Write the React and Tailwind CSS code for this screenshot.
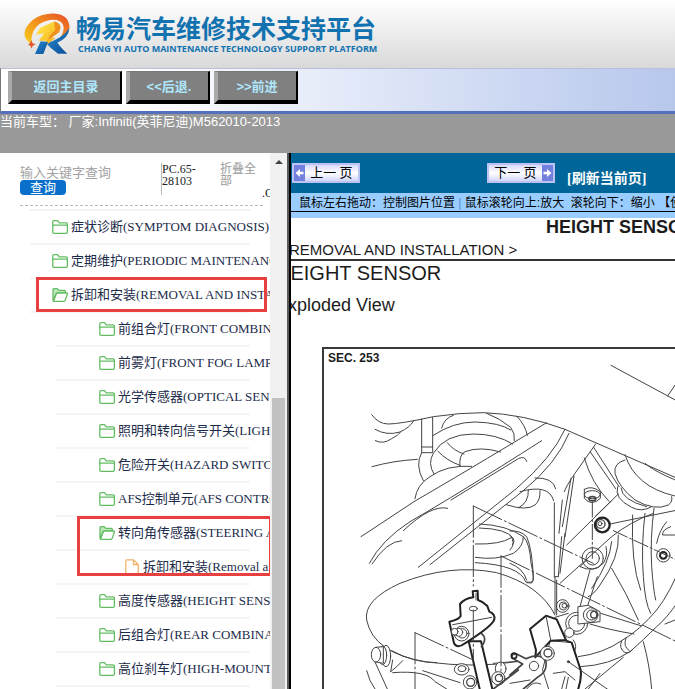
import React from 'react';

const treeItems = [
  { id: 1, level: 1, type: 'folder', label: '症状诊断(SYMPTOM DIAGNOSIS)' },
  { id: 2, level: 1, type: 'folder', label: '定期维护(PERIODIC MAINTENANCE)' },
  { id: 3, level: 1, type: 'open', label: '拆卸和安装(REMOVAL AND INSTALLATION)', mark: 'single' },
  { id: 4, level: 2, type: 'folder', label: '前组合灯(FRONT COMBINATION LAMP)' },
  { id: 5, level: 2, type: 'folder', label: '前雾灯(FRONT FOG LAMP)' },
  { id: 6, level: 2, type: 'folder', label: '光学传感器(OPTICAL SENSOR)' },
  { id: 7, level: 2, type: 'folder', label: '照明和转向信号开关(LIGHTING & TURN SIGNAL SWITCH)' },
  { id: 8, level: 2, type: 'folder', label: '危险开关(HAZARD SWITCH)' },
  { id: 9, level: 2, type: 'folder', label: 'AFS控制单元(AFS CONTROL UNIT)' },
  { id: 10, level: 2, type: 'open', label: '转向角传感器(STEERING ANGLE SENSOR)', mark: 'double' },
  { id: 11, level: 3, type: 'file', label: '拆卸和安装(Removal and Installation)' },
  { id: 12, level: 2, type: 'folder', label: '高度传感器(HEIGHT SENSOR)' },
  { id: 13, level: 2, type: 'folder', label: '后组合灯(REAR COMBINATION LAMP)' },
  { id: 14, level: 2, type: 'folder', label: '高位刹车灯(HIGH-MOUNTED STOP LAMP)' },
];

const levelStyles = {
  1: 'ml-[30px] pl-[22px]',
  2: 'ml-14 pl-[43px]',
  3: 'ml-14 pl-[69px]',
};

const markStyles = {
  single: 'left-[6px] -top-[2px] w-[231px] h-[35px]',
  double: 'left-[21px] -top-px w-[195px] h-[60px]',
};

const Logo = () => (
  <svg className="w-[46px] h-[44px] shrink-0" viewBox="74 36 138 132" aria-hidden="true">
    <defs>
      <linearGradient id="swirl" x1="1" y1="0" x2="0" y2="1">
        <stop offset="0" stopColor="#e8502a" />
        <stop offset="0.45" stopColor="#f08a1d" />
        <stop offset="1" stopColor="#f9cf1c" />
      </linearGradient>
      <linearGradient id="bolt" x1="0" y1="0" x2="1" y2="1">
        <stop offset="0" stopColor="#fff04a" />
        <stop offset="1" stopColor="#f5a11a" />
      </linearGradient>
      <linearGradient id="leg" x1="0" y1="0" x2="1" y2="1">
        <stop offset="0" stopColor="#2a8fd6" />
        <stop offset="1" stopColor="#0a4c94" />
      </linearGradient>
    </defs>
    <path d="M96 132 Q66 112 80 84 Q104 44 152 41 Q204 38 210 76 Q212 112 170 126 Q194 104 193 82 Q190 56 152 60 Q116 66 102 94 Q94 114 96 132Z" fill="url(#swirl)" />
    <path d="M210 84 Q208 114 174 128 Q184 142 204 161 L176 161 Q154 146 140 130 Q190 116 210 84Z" fill="url(#leg)" />
    <path d="M122 84 L160 66 Q186 70 178 94 L156 112 L168 114 L130 144 L140 122 L118 122 L134 100 L110 104Z" fill="url(#bolt)" />
    <path d="M164 64 Q194 72 178 98 L146 120 L152 106 L168 90Z" fill="#f0901e" />
    <path d="M124 124 L146 126 L132 162 L107 162Z" fill="url(#leg)" />
    <path d="M96 120 L100 130 L109 133 L100 137 L97 146 L93 137 L86 134 L92 130Z" fill="#e2582c" />
  </svg>
);

const TreeIcon = ({ type }) => {
  if (type === 'file') {
    return (
      <svg className="w-[18px] h-4 shrink-0" viewBox="0 0 18 16" fill="none" stroke="#f0b36a" strokeWidth="1.3">
        <path d="M.8 16V2.2Q.8.8 2.2.8H8.5L13.2 5.5V16M8.5.8V5.5H13.2" />
      </svg>
    );
  }
  return (
    <svg className="w-[19px] h-4 shrink-0" viewBox="0 0 19 16" fill="none" stroke="#62bd62" strokeWidth="1.3" strokeLinejoin="round">
      {type === 'open' ? (
        <>
          <path d="M1 13.4V2.6Q1 1.6 2 1.6H5.2L6.8 3.4H12.4Q13.4 3.4 13.4 4.4V5.8H5.6Q4.6 5.9 4.2 6.8L1.4 13.6Z" fill="#bfe6bd" />
          <path d="M1.4 14L4.2 6.8Q4.6 5.9 5.6 5.9H14.6Q15.8 5.9 15.4 7L13.2 13.4Q12.9 14.3 12 14.3H1.8Z" />
        </>
      ) : (
        <path d="M.8 13.2V2.8Q.8 1.6 2 1.6H5.6L7.2 3.8H14Q15.4 3.8 15.4 5.1V13Q15.4 14.3 14 14.3H2Q.8 14.3.8 13.2ZM.8 6.2H15.4" />
      )}
    </svg>
  );
};

const Header = () => (
  <header>
    <div className="h-[68px] flex items-center pl-6 bg-linear-to-b from-white to-[#d9d9d9]">
      <Logo />
      <div className="pl-[6px] pt-[2px] text-[#1272b0] font-bold whitespace-nowrap">
        <h1 className="text-[25px] leading-7 font-bold">畅易汽车维修技术支持平台</h1>
        <p className="pl-[2px] text-[9px] leading-3 font-['Open_Sans',sans-serif]">
          CHANG YI AUTO MAINTENANCE TECHNOLOGY SUPPORT PLATFORM
        </p>
      </div>
    </div>
    <nav className="h-[46px] flex items-start gap-1 pl-[7px] pt-[2px] border-l border-l-[#777] border-t border-t-[#b9bfdc] border-b-[3px] border-b-[#5470bd] bg-linear-to-r from-white from-20% to-[#b7c7ec]">
      <ToolButton width="w-[114px]">返回主目录</ToolButton>
      <ToolButton width="w-[84px]">&lt;&lt;后退.</ToolButton>
      <ToolButton width="w-[84px]">&gt;&gt;前进</ToolButton>
    </nav>
    <p className="h-[39px] bg-[#999] text-white text-[13px] leading-4 whitespace-pre">当前车型： 厂家:Infiniti(英菲尼迪)M562010-2013</p>
  </header>
);

const ToolButton = ({ width, children }) => (
  <button
    type="button"
    className={`${width} h-[33px] pt-[2px] bg-[#808080] border-t border-t-[#777] border-l-4 border-l-[#aaa] border-r-2 border-r-black border-b-4 border-b-black text-[#aee6fb] text-[13px] font-bold`}
  >
    {children}
  </button>
);

const Sidebar = () => (
  <aside className="w-[289px] shrink-0 flex border-r-2 border-[#5a5a5a] bg-white overflow-hidden font-['Liberation_Serif','Noto_Sans_CJK_SC',serif]">
    <div className="w-[270px] overflow-hidden">
      <form className="h-[53px] ml-5 mr-[7px] flex border-b border-dashed border-[#bbb]">
        <div className="w-[141px] shrink-0 pt-[13px]">
          <input
            type="text"
            aria-label="关键字"
            placeholder="输入关键字查询"
            className="block w-[120px] h-[14px] text-[13px] leading-[14px] placeholder:text-[#a3a3a3] outline-none"
          />
          <button type="button" className="block w-[46px] h-[15px] rounded-[4px] bg-[#0a6fcb] text-white text-[13px] leading-[15px]">
            查询
          </button>
        </div>
        <p className="w-[59px] shrink-0 h-8 mt-[10px] border-l border-[#bbb] text-xs leading-3 text-[#222]">PC.65-<br />28103</p>
        <button type="button" className="w-[38px] shrink-0 h-6 mt-[10px] text-left text-xs leading-3 text-[#999]">折叠全部</button>
        <span className="mt-[34px] ml-1 shrink-0 text-xs leading-3 text-[#222]">.C</span>
      </form>
      <ul className="mt-[3px]">
        <li className="ml-[30px] mr-5 h-[2px] bg-[#f3f3f3]" />
        {treeItems.map(item => (
          <li key={item.id} className={`relative mr-5 h-[34px] flex items-center border-b-2 border-[#f5f5f5] ${levelStyles[item.level]}`}>
            <TreeIcon type={item.type} />
            <a href="#tree" className="text-[13px] text-[#1c2b4a] whitespace-nowrap">{item.label}</a>
            {item.mark && <span className={`absolute z-10 border-3 border-[#e8403f] ${markStyles[item.mark]}`} />}
          </li>
        ))}
      </ul>
    </div>
    <div className="flex-1 flex flex-col items-center bg-[#f1f1f1]">
      <svg className="w-2 h-1 mt-[7px]" viewBox="0 0 8 4" fill="#444"><path d="M0 4L4 0L8 4Z" /></svg>
      <div className="w-[13px] flex-1 mt-[234px] bg-[#c1c1c1]" />
    </div>
  </aside>
);

const PageButton = ({ direction, children }) => (
  <button
    type="button"
    className="h-5 w-[68px] flex items-center border-2 border-[#b9c4f3] bg-linear-to-b from-[#d9d8fb] via-white to-[#d3d6fa] text-[13px] text-black whitespace-pre"
  >
    {direction === 'prev' && <Arrow flip />}
    <span className="flex-1 text-center leading-4">{children}</span>
    {direction === 'next' && <Arrow />}
  </button>
);

const Arrow = ({ flip }) => (
  <svg className="w-[11px] h-4 shrink-0" viewBox="0 0 11 16">
    <rect width="11" height="16" fill="#7480dd" />
    <path d={flip ? 'M1.5 8L6 4V6.8H9.5V9.2H6V12Z' : 'M9.5 8L5 4V6.8H1.5V9.2H5V12Z'} fill="#fff" />
  </svg>
);

// line drawing of the front suspension with the height sensor
const SuspensionDrawing = () => (
  <svg
    className="w-[420px] h-[400px] shrink-0"
    viewBox="0 0 1260 1200"
    fill="none"
    stroke="#444"
    strokeWidth="3"
    strokeLinecap="round"
    strokeLinejoin="round"
    aria-label="SEC. 253"
  >
    {/* wheel house and upper arm */}
    <g transform="translate(78 153)">
      <path d="M65 44Q85 72 115 72Q150 72 250 50Q330 38 400 38Q520 42 645 88L975 232" />
      <path d="M75 88Q110 108 150 96Q180 82 190 64M76 122Q100 134 125 116Q145 106 152 96M66 200Q130 182 202 178" />
      <path d="M215 57V158H248V52M215 141H248" />
      <path d="M275 84Q282 55 310 46M250 106Q310 66 375 66Q450 68 482 90M410 40Q450 55 482 82Q496 100 493 122M500 48Q526 75 532 106" />
      <path d="M252 222Q232 190 250 160Q285 102 370 102Q440 102 488 132M292 128Q310 152 342 162M264 154Q290 182 330 196M330 200Q326 165 345 155Q390 138 452 156" />
      <path d="M215 158Q194 195 220 242M195 296Q200 255 240 230Q290 194 365 199" />
      <path d="M33 410L195 303Q330 225 590 68M58 490Q95 420 180 365Q320 285 575 122M66 492Q110 424 155 422M160 392Q245 312 293 325M303 300L505 176Q525 166 530 184" />
      <path d="M205 502L500 265Q605 175 645 88M240 494L520 272Q620 190 657 100" />
      <path d="M468 314Q530 334 555 315Q572 300 570 272M505 324Q537 308 535 270" />
      <path d="M388 372Q470 375 520 410M388 384Q470 386 490 415Q495 425 488 434M376 432Q450 434 482 414M376 472Q440 482 490 460Q520 440 520 410Q540 430 543 490Q556 540 545 549L530 548M376 488Q510 495 527 545" />
    </g>

    {/* body side, springs and links */}
    <g transform="translate(453 -27)">
      <path d="M408 76L760 266M578 168L612 118" />
      <path d="M180 414Q235 412 242 446M135 455Q222 430 236 482M362 312L300 400Q272 440 268 455M356 322L432 440M346 336L422 446M328 354Q350 430 402 484" />
      <path d="M450 344Q480 440 600 468L680 476M510 370Q550 405 680 450M450 360Q415 370 420 400Q430 440 480 480Q540 514 580 495Q594 485 590 470" />
      <path d="M428 440Q416 475 470 502Q500 518 530 500M438 444Q440 480 515 500" />
      <path d="M297 408L270 590M288 415L262 560M262 480L252 580M328 448V475Q350 500 376 475V455Q350 435 328 448M360 530L430 462" />
      <ellipse cx="352" cy="464" rx="24" ry="12" />
      <ellipse cx="352" cy="476" rx="10" ry="6" strokeWidth="5" />
    </g>

    {/* right side links, hose and sensor body */}
    <g transform="translate(558 393)">
      <path d="M133 68V292M165 160L150 280M155 170L145 290M145 290H135V400" />
      <path d="M170 195L305 62M150 310L305 170Q360 126 430 100M300 132L580 74M210 260L230 240" />
      <path d="M325 165Q330 230 270 315Q250 345 235 350M305 185Q300 245 245 325M240 270L210 380M262 290L232 380" />
      <path d="M368 105Q362 250 392 330M405 100Q393 200 400 290Q405 370 422 400M432 85Q420 180 425 260Q430 330 437 360M470 125Q448 150 440 190" />
      <path d="M305 265Q350 340 385 420M482 140Q455 150 458 165H500M400 485Q420 560 425 627M465 432L520 410M225 627L340 532M235 627L270 580" />
      <path d="M520 240Q480 340 440 390Q390 450 335 482Q280 520 205 530M580 235Q500 390 440 440Q400 480 360 515Q300 555 212 560" />
      <path d="M335 482Q325 505 345 518Q360 520 368 508M348 474Q338 500 358 512" />
      <path d="M0 153Q30 150 50 170Q68 210 70 300Q66 310 50 306M0 165Q20 190 0 210M0 250Q40 265 50 300" />
      <circle cx="248" cy="235" r="32" /><circle cx="248" cy="235" r="20" />
      <path d="M210 260Q250 280 280 250Q295 225 288 200" />
      <circle cx="277" cy="135" r="22" strokeWidth="7" stroke="#222" fill="#fff" /><circle cx="272" cy="132" r="13" strokeWidth="4" /><circle cx="270" cy="131" r="6" />
      <circle cx="460" cy="226" r="20" fill="#fff" /><circle cx="460" cy="226" r="10" strokeWidth="6" stroke="#222" />
      <circle cx="158" cy="378" r="19" /><circle cx="160" cy="378" r="12" /><circle cx="163" cy="377" r="7" />
      <circle cx="200" cy="430" r="33" fill="#fff" /><circle cx="200" cy="430" r="24" /><circle cx="178" cy="458" r="14" fill="#fff" />
      <path d="M205 380L235 376L270 395V425L205 432Z" fill="#fff" />
      <circle cx="242" cy="405" r="22" /><circle cx="245" cy="405" r="15" /><circle cx="252" cy="404" r="10" strokeWidth="4" />
      <path d="M272 400L395 438M240 432Q300 450 372 462M190 480Q205 500 190 520M135 412L175 400M140 300V405" />
      <path d="M122 482L185 488L212 570Q216 600 200 640L120 640L98 570Z" fill="#fff" strokeWidth="3" />
      <path d="M60 447L108 407L140 418L168 480L122 482L76 532L78 510Z" fill="#fff" strokeWidth="6" stroke="#222" />
      <path d="M168 482L185 488L212 570Q216 600 200 640" strokeWidth="6" stroke="#222" />
      <path d="M108 407L122 480" />
      <path d="M0 585L38 552L6 534Q4 520 20 522L48 536Q90 515 108 545Q112 575 85 590L40 627" strokeWidth="5" />
      <circle cx="112" cy="520" r="21" fill="#fff" /><circle cx="114" cy="519" r="12" strokeWidth="4" /><circle cx="72" cy="558" r="14" />
      <path d="M130 580L165 575L195 600M165 590L155 627M175 592L168 627M0 610L60 600M50 627Q70 600 92 612" />
      <circle cx="175" cy="545" r="3" fill="#222" />
      <path d="M175 545L310 640" />
      <path d="M247 65V235M310 152L500 240" strokeDasharray="46 8 6 8" />
    </g>

    {/* lower arm and sensor bracket */}
    <g transform="translate(78 393)">
      <path d="M615 405Q570 315 440 278Q300 250 150 310Q40 360 50 420Q70 520 230 546Q380 565 500 545" />
      <ellipse cx="108" cy="528" rx="14" ry="32" fill="#fff" /><ellipse cx="98" cy="526" rx="12" ry="28" fill="#fff" />
      <path d="M78 502L100 500V550L78 546" fill="#fff" />
      <ellipse cx="78" cy="524" rx="14" ry="22" fill="#fff" />
      <path d="M125 512Q190 548 260 548M122 575L128 540M122 575Q140 562 158 542M128 578Q230 570 255 605L290 627M50 572Q58 605 75 627M75 546L112 627M218 572L330 608M430 550L500 544" />
      <ellipse cx="335" cy="568" rx="22" ry="17" fill="#fff" /><ellipse cx="336" cy="566" rx="12" ry="9" />
      <circle cx="360" cy="607" r="20" fill="#fff" /><circle cx="362" cy="607" r="12" strokeWidth="4" />
      <ellipse cx="452" cy="566" rx="16" ry="20" fill="#fff" />
      <circle cx="445" cy="595" r="20" fill="#fff" /><circle cx="447" cy="594" r="11" strokeWidth="4" />
      <path d="M356 484L392 640H430L393 484Z" fill="#fff" strokeWidth="6" stroke="#222" />
      <path d="M394 460Q414 476 394 500" strokeWidth="5" />
      <path d="M368 334L383 332L384 360Q400 365 412 378L418 395Q436 402 433 418Q428 438 345 490Q322 508 312 490L298 425Q325 420 332 408L330 372Q345 355 370 352Z" fill="#fff" strokeWidth="6" stroke="#222" />
      <path d="M308 434L330 430L425 412M378 340V360" />
      <ellipse cx="370" cy="386" rx="12" ry="7" />
      <circle cx="335" cy="461" r="22" /><circle cx="337" cy="460" r="14" /><circle cx="326" cy="457" r="12" fill="#fff" /><circle cx="314" cy="455" r="10" fill="#fff" />
      <circle cx="492" cy="527" r="8" strokeWidth="5" stroke="#222" />
      <path d="M430 627L505 570" strokeWidth="5" />
      <g strokeDasharray="94 9 6 9">
        <path d="M370 78V318M370 390V540M370 78L730 250M453 228V590M453 228L1000 495M195 458L370 540M195 458V640" />
      </g>
    </g>
  </svg>
);

const Viewer = () => (
  <main className="flex-1 min-w-0 border-l-2 border-black bg-white overflow-hidden">
    <div className="h-10 flex items-start bg-[#006699] pl-px pt-[10px] font-['Liberation_Serif','Noto_Sans_CJK_SC',serif] whitespace-nowrap">
      <PageButton direction="prev">上一 页</PageButton>
      <div className="w-[127px] shrink-0" />
      <PageButton direction="next">下一 页</PageButton>
      <button type="button" className="ml-3 mt-2 text-sm leading-4 font-bold text-white">[刷新当前页]</button>
    </div>
    <div className="h-[25px] bg-[#99ccff]">
      <p className="h-[19px] pl-2 border-b border-black text-xs leading-5 text-black whitespace-pre">
        鼠标左右拖动：控制图片位置<span className="text-[#5b8fd0]"> | </span>鼠标滚轮向上:放大  滚轮向下：缩小 【使用鼠标】
      </p>
    </div>
    <article className="-ml-[15px] w-[900px] text-[#1c1c1c]">
      <h2 className="pl-[270px] text-lg leading-[18px] font-bold">HEIGHT SENSOR</h2>
      <p className="h-[25px] pt-[5px] text-[15px] leading-[18px] border-b-2 border-[#333]">&lt; REMOVAL AND INSTALLATION &gt;</p>
      <h3 className="text-xl leading-6">HEIGHT SENSOR</h3>
      <h4 className="pt-2 text-lg leading-6">Exploded View</h4>
      <figure className="relative mt-[30px] ml-[46px] border-2 border-[#3a3a3a]">
        <figcaption className="absolute left-1 top-[3px] text-xs leading-3 font-bold">SEC. 253</figcaption>
        <SuspensionDrawing />
      </figure>
    </article>
  </main>
);

const App = () => {
  return (
    <div className="h-screen flex flex-col overflow-hidden bg-white font-['Liberation_Sans','Noto_Sans_CJK_SC',sans-serif]">
      <Header />
      <div className="flex-1 min-h-0 flex">
        <Sidebar />
        <Viewer />
      </div>
    </div>
  );
};

export default App;
